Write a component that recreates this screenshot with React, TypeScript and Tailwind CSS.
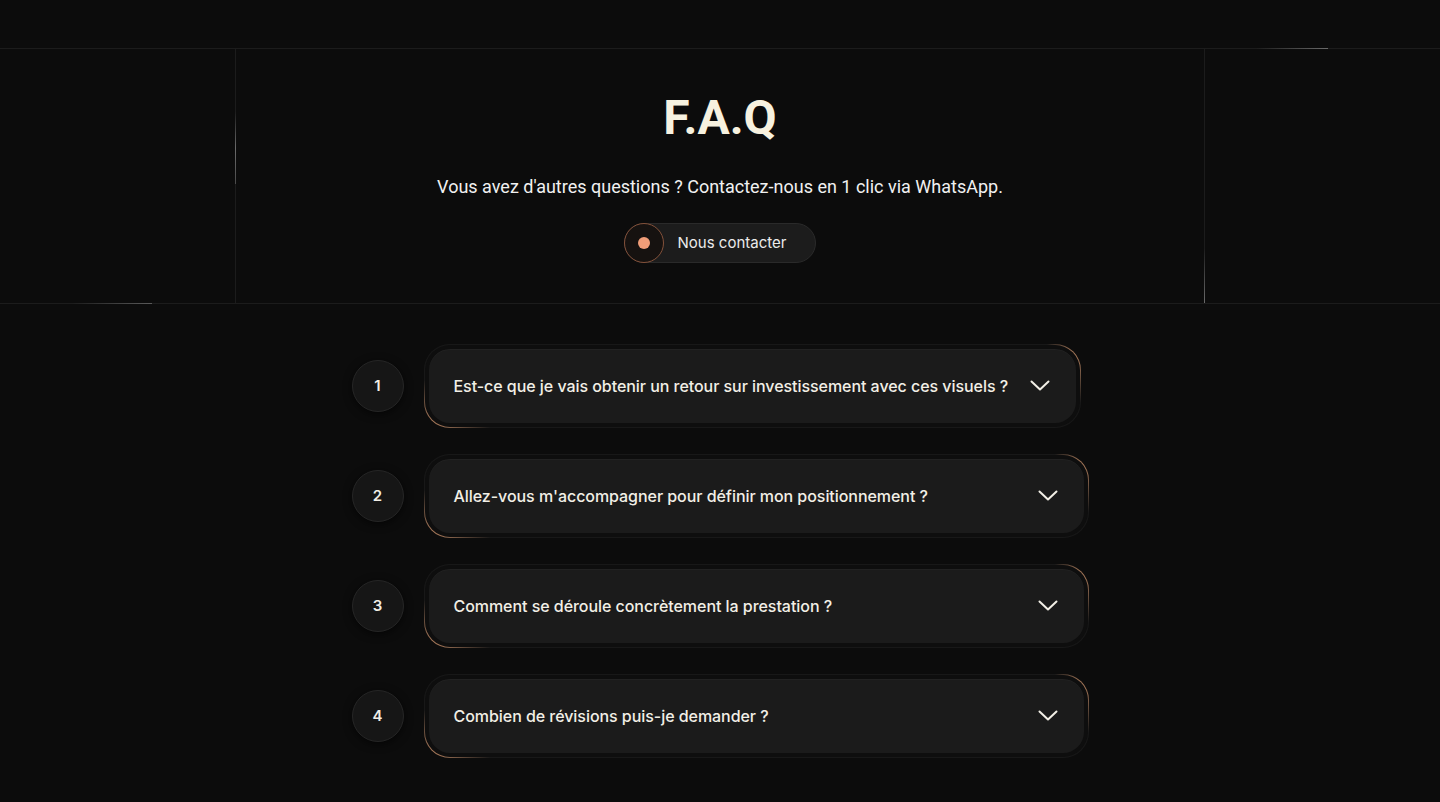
import { useState } from 'react'

type TFaqItem = {
  question: string
  answer: string
}

const FAQ_ITEMS: TFaqItem[] = [
  {
    question: 'Est-ce que je vais obtenir un retour sur investissement avec ces visuels ?',
    answer: 'Oui, nos visuels sont pensés pour convertir.',
  },
  {
    question: "Allez-vous m'accompagner pour définir mon positionnement ?",
    answer: 'Bien sûr, nous travaillons ensemble sur votre positionnement.',
  },
  {
    question: 'Comment se déroule concrètement la prestation ?',
    answer: 'Brief, production, livraison et révisions.',
  },
  {
    question: 'Combien de révisions puis-je demander ?',
    answer: 'Deux révisions sont incluses.',
  },
]

function Chevron() {
  return (
    <svg width="20" height="12" viewBox="0 0 20 12" fill="none" className="shrink-0">
      <polyline
        points="1.5,1.5 10,9.5 18.5,1.5"
        stroke="#f2efe6"
        strokeWidth="2"
        strokeLinecap="round"
        strokeLinejoin="round"
      />
    </svg>
  )
}

function FaqRow({ item, index }: { item: TFaqItem; index: number }) {
  const [open, setOpen] = useState(false)
  const isFirst = index === 0

  return (
    <div className="flex items-center gap-5">
      <div className="flex h-[52px] w-[52px] shrink-0 items-center justify-center rounded-full border border-[#262626] bg-[#161616] text-[15px] font-semibold text-[#f1eee6] shadow-[0_2px_8px_rgba(0,0,0,0.6)]">
        {index + 1}
      </div>
      <div
        className={`rounded-[26px] bg-[radial-gradient(34px_58px_at_100%_0%,#d0956d,transparent),radial-gradient(66px_48px_at_0%_100%,#c9906a,transparent),linear-gradient(#181818,#181818)] p-px ${
          isFirst ? 'w-[657px]' : 'flex-1'
        }`}
      >
        <div className="rounded-[25px] bg-[#0e0e0e] p-1">
          <button
            onClick={() => setOpen(!open)}
            className="flex min-h-[74px] w-full items-center justify-between gap-4 rounded-[21px] bg-[#1b1b1b] pl-[25px] pr-[26px] text-left shadow-[inset_0_1px_0_rgba(255,255,255,0.03)]"
          >
            <span className="whitespace-nowrap text-[16px] font-medium tracking-[-0.05px] text-[#f2efe6]">
              {item.question}
            </span>
            <Chevron />
          </button>
          {open && <p className="px-6 pb-4 pt-3 text-sm text-[#bdb8ad]">{item.answer}</p>}
        </div>
      </div>
    </div>
  )
}

export default function App() {
  return (
    <div className="min-h-[802px] bg-[#0c0c0c] pt-12 font-['Inter',sans-serif] text-white">
      {/* header band */}
      <section className="relative border-y border-[#1c1c1c]">
        <div className="relative mx-auto flex w-[970px] flex-col items-center border-x border-[#1c1c1c] pb-[40px] pt-[45px]">
          <h1 className="font-['Roboto',sans-serif] text-[48px] font-bold leading-none text-[#f7f2e0]">
            F.A.Q
          </h1>
          <p className="mt-[31px] font-['Roboto',sans-serif] text-[18px] leading-7 text-[#f1f1f1]">
            Vous avez d'autres questions ? Contactez-nous en 1 clic via WhatsApp.
          </p>
          <button className="mt-[22px] flex h-10 items-center rounded-full border border-[#2a2a2a] bg-[#1c1c1c] pr-[29px]">
            <span className="-ml-px flex h-10 w-10 items-center justify-center rounded-full border border-[#83513a] bg-[#161210]">
              <span className="h-3 w-3 rounded-full bg-[#f09d78]" />
            </span>
            <span className="ml-[14px] text-[15px] text-[#ebebeb]">Nous contacter</span>
          </button>

          {/* beams */}
          <span className="absolute left-[-1px] top-[63px] h-[72px] w-px bg-[linear-gradient(to_bottom,transparent,#6a6a6a,#4a4a4a)]" />
          <span className="absolute bottom-0 right-[-1px] h-[55px] w-px bg-[linear-gradient(to_bottom,transparent,#6a6a6a)]" />
        </div>
        <span className="absolute bottom-[-1px] left-[72px] h-px w-[80px] bg-[linear-gradient(to_right,transparent,#5a5a5a)]" />
        <span className="absolute left-[1256px] top-[-1px] h-px w-[72px] bg-[linear-gradient(to_right,transparent,#6a6a6a)]" />
      </section>

      {/* faq list */}
      <section className="mx-auto flex w-[737px] flex-col gap-[26px] pb-12 pt-10">
        {FAQ_ITEMS.map((item, i) => (
          <FaqRow key={i} item={item} index={i} />
        ))}
      </section>
    </div>
  )
}
